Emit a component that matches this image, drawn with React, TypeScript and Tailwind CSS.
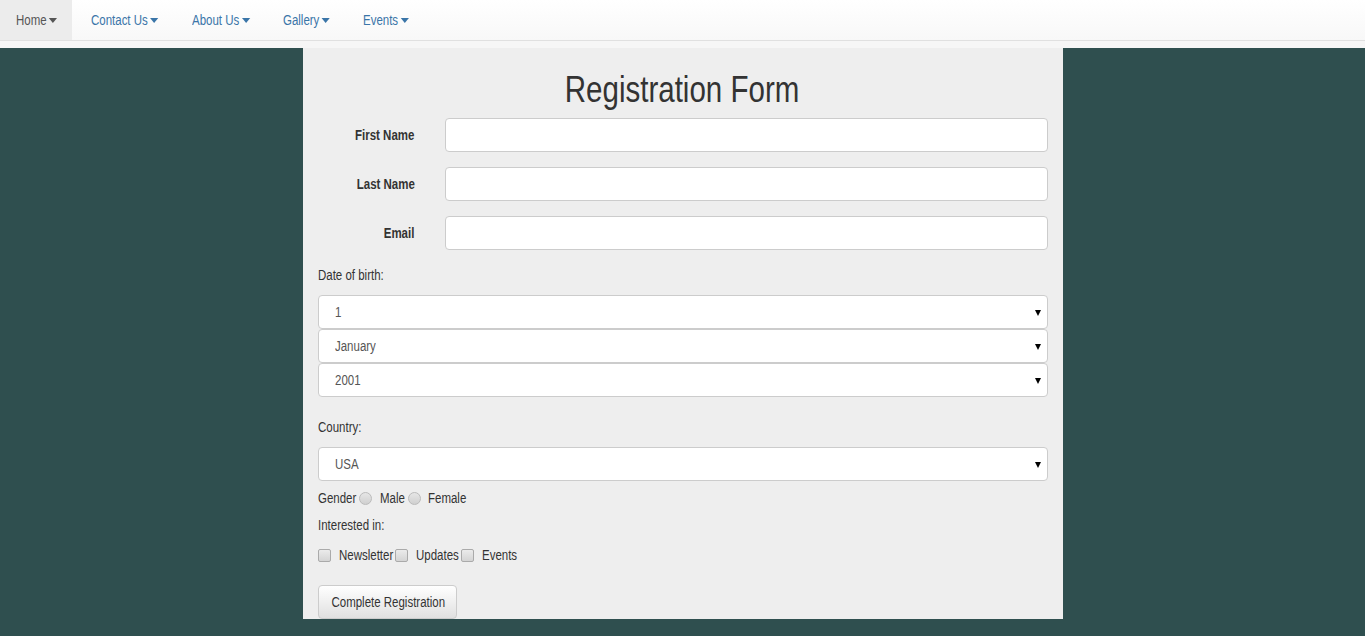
// the reference uses a narrow sans; squeeze Liberation Sans to match
function N({ children, className = 'origin-left' }: { children: React.ReactNode; className?: string }) {
  return <span className={'inline-block whitespace-nowrap scale-x-[0.82] ' + className}>{children}</span>
}

const navItems = [
  { label: 'Home', w: 'w-[72px]', active: true },
  { label: 'Contact Us', w: 'w-[101px] ml-[3px]' },
  { label: 'About Us', w: 'w-[91px]' },
  { label: 'Gallery', w: 'w-[80px]' },
  { label: 'Events', w: 'w-[80px]' },
]

function Caret() {
  return <span className='inline-block ml-[3px] w-0 h-0 border-l-[5px] border-r-[5px] border-t-[5px] border-l-transparent border-r-transparent border-t-current align-middle' />
}

function Select({ value }: { value: string }) {
  return (
    <div className='relative h-[34px] bg-white border border-[#ccc] rounded-[4px] flex items-center pl-[16px] text-[14px] text-[#555]'>
      <N>{value}</N>
      <span className='absolute right-[6px] top-[14px] w-0 h-0 border-l-[3.5px] border-r-[3.5px] border-t-[6px] border-l-transparent border-r-transparent border-t-black' />
    </div>
  )
}

function Radio() {
  return <span className='block w-[13px] h-[13px] shrink-0 rounded-full border border-[#bbb] bg-gradient-to-b from-[#e6e6e6] to-[#d0d0d0]' />
}

function Check() {
  return <span className='block w-[13px] h-[13px] shrink-0 rounded-[2px] border border-[#aaa] bg-gradient-to-b from-[#ebebeb] to-[#d4d4d4]' />
}

export default function App() {
  return (
    <div className='min-h-screen bg-[#2f4f4f] text-[14px] text-[#333]' style={{ fontFamily: '"Liberation Sans", Arial, sans-serif' }}>
      <nav className='h-[41px] bg-gradient-to-b from-white to-[#f8f8f8] border-b border-[#e0e0e0] flex'>
        {navItems.map((item) => (
          <a
            key={item.label}
            className={
              item.active
                ? 'h-full flex items-center pl-[16px] bg-[#ececec] text-[#555] ' + item.w
                : 'h-full flex items-center pl-[16px] text-[#3a75a8] ' + item.w
            }
          >
            <N>
              {item.label}
              <Caret />
            </N>
          </a>
        ))}
      </nav>
      <div className='h-[7px] bg-[#f6f6f6]' />
      <div className='w-[760px] mx-auto bg-[#eeeeee] px-[15px]'>
        <h1 className='text-[36px] leading-[40px] text-center pt-[22px] text-[#333]'>
          <N className='origin-center'>Registration Form</N>
        </h1>
        <div className='mt-[8px] flex flex-col gap-[15px]'>
          {['First Name', 'Last Name', 'Email'].map((l) => (
            <div key={l} className='flex items-center'>
              <label className='w-[97px] text-right font-bold'>
                <N className='origin-right'>{l}</N>
              </label>
              <input className='ml-[30px] flex-1 h-[34px] bg-white border border-[#ccc] rounded-[4px]' />
            </div>
          ))}
        </div>
        <div className='mt-[15px] leading-[20px]'>
          <N>Date of birth:</N>
        </div>
        <div className='mt-[10px] flex flex-col'>
          <Select value='1' />
          <Select value='January' />
          <Select value='2001' />
        </div>
        <div className='mt-[20px] leading-[20px]'>
          <N>Country:</N>
        </div>
        <div className='mt-[10px]'>
          <Select value='USA' />
        </div>
        <div className='mt-[7px] flex items-center leading-[20px]'>
          <span className='w-[41px]'><N>Gender</N></span>
          <Radio />
          <span className='ml-[8px] w-[28px]'><N>Male</N></span>
          <Radio />
          <span className='ml-[7px]'><N>Female</N></span>
        </div>
        <div className='mt-[7px] leading-[20px]'>
          <N>Interested in:</N>
        </div>
        <div className='mt-[10px] flex items-center leading-[20px]'>
          <Check />
          <span className='ml-[8px] w-[56px]'><N>Newsletter</N></span>
          <Check />
          <span className='ml-[8px] w-[45px]'><N>Updates</N></span>
          <Check />
          <span className='ml-[8px]'><N>Events</N></span>
        </div>
        <button className='mt-[20px] w-[139px] h-[34px] border border-[#ccc] rounded-[4px] bg-gradient-to-b from-white to-[#e0e0e0] text-[#333] text-center'>
          <N className='origin-center'>Complete Registration</N>
        </button>
      </div>
    </div>
  )
}
